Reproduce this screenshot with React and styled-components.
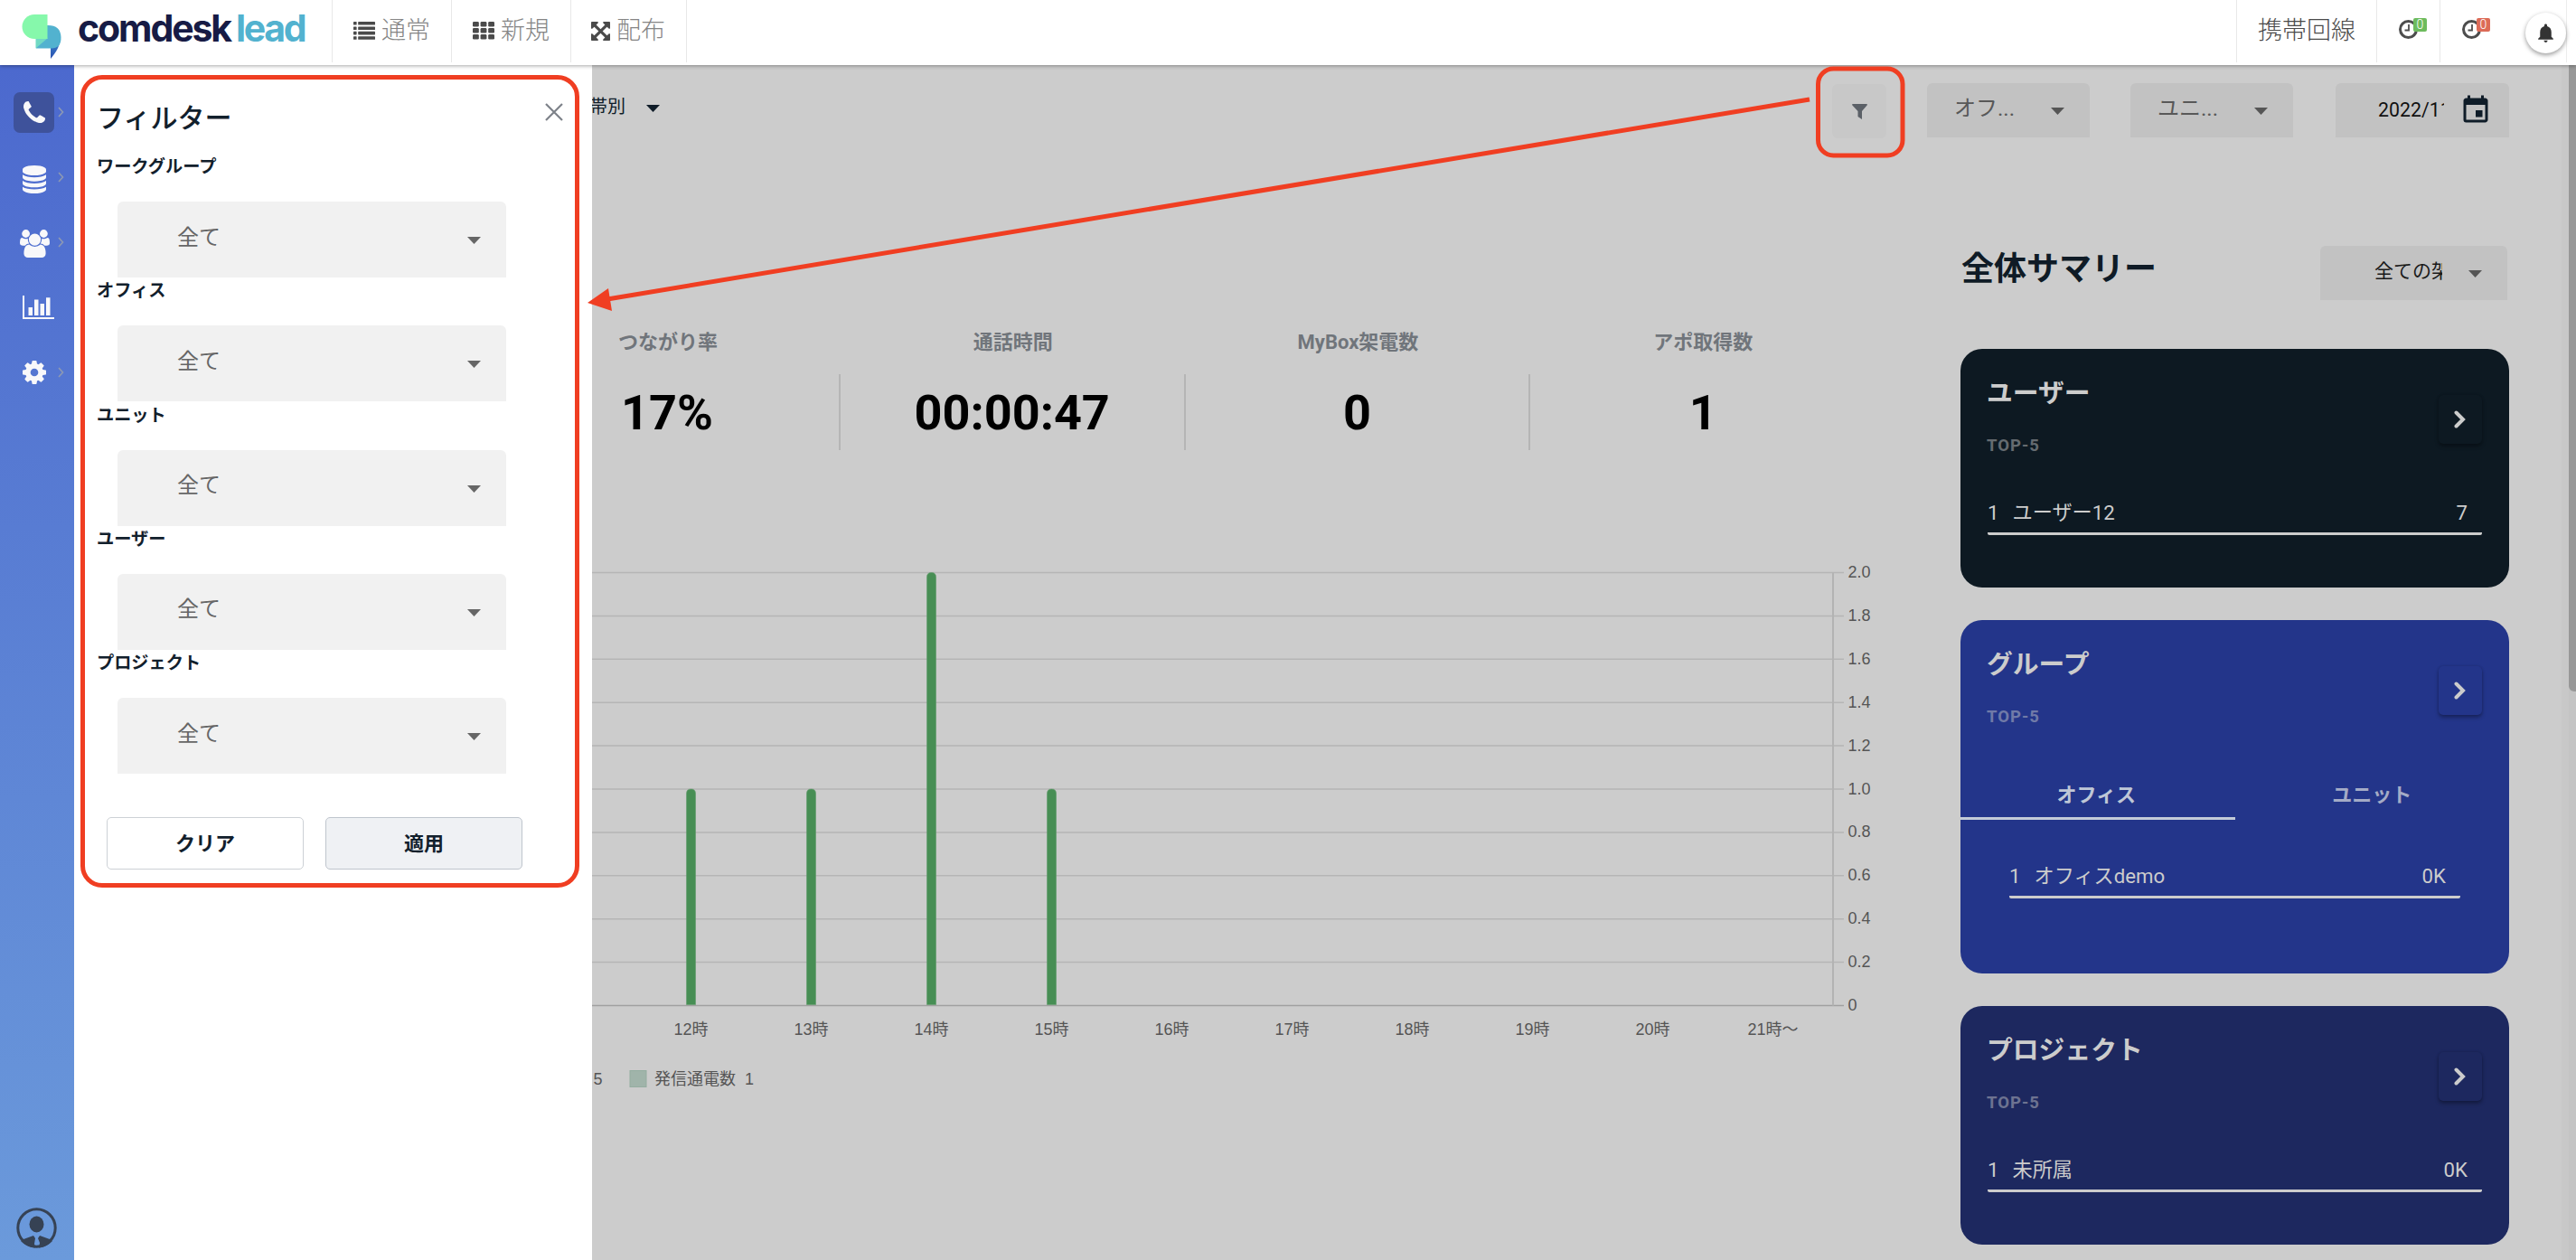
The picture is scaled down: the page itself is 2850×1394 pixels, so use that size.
import React from 'react';
import styled, { createGlobalStyle } from 'styled-components';
import { MdEvent, MdNotifications } from 'react-icons/md';

const GlobalStyle = createGlobalStyle`
  * {
      box-sizing: border-box;
  }

  body {
      margin: 0;
      overflow: hidden;
      background-color: #fff;
      font-family: Roboto, 'Noto Sans CJK JP', sans-serif;
  }

  svg {
      display: block;
      flex: none;
  }
`;

const Page = styled.div`
  position: relative;
  display: flex;
  flex-direction: column;
  width: 2850px;
  height: 1394px;
  overflow: hidden;
`;

/* ---------- header ---------- */

const Header = styled.header`
  position: relative;
  z-index: 2;
  display: flex;
  align-items: flex-start;
  flex: none;
  height: 72px;
  background-color: #fff;
  box-shadow: 0 1px 4px rgba(0, 0, 0, 0.35);
`;

const Brand = styled.div`
  display: flex;
  width: 368px;
  height: 69px;
  padding: 15px 0 0 23px;
  border-right: 1px solid #e8e8e8;
`;

const BrandName = styled.div`
  display: flex;
  gap: 6px;
  margin: -4px 0 0 18px;
  font: 700 41px/41px Inter, sans-serif;
  letter-spacing: -2.1px;
  color: #171b45;

  span {
      color: #52b2cf;
      letter-spacing: -2.3px;
  }
`;

const HeaderItem = styled.div`
  display: flex;
  align-items: center;
  gap: 7px;
  height: 69px;
  padding: ${(p) => p.$pad || '0 23px 1px'};
  border-right: 1px solid #e8e8e8;
  font-size: 27px;
  font-weight: 300;
  line-height: 30px;
  color: ${(p) => p.$color || '#858585'};
`;

const HeaderSpace = styled.div`
  flex: 1;
  height: 69px;
  border-right: 1px solid #e8e8e8;
`;

const ClockBox = styled.div`
  position: relative;
  width: ${(p) => p.$width}px;
  height: 69px;
  padding: 22px 0 0 24px;
  border-right: ${(p) => (p.$last ? 'none' : '1px solid #e8e8e8')};
`;

const Badge = styled.span`
  position: absolute;
  top: 20px;
  left: 40px;
  width: 15px;
  height: 15px;
  border-radius: 2px;
  background-color: ${(p) => p.$color};
  color: #fff;
  font-size: 14px;
  font-weight: 300;
  line-height: 14px;
  text-align: center;
`;

const BellArea = styled.div`
  width: 46px;
  height: 69px;
  padding-top: 14px;
  border-right: 1px solid #ececec;
`;

const BellButton = styled.div`
  display: flex;
  align-items: center;
  justify-content: center;
  width: 45px;
  height: 45px;
  border-radius: 50%;
  background-color: #fff;
  color: #333;
  box-shadow: 0 2px 5px rgba(0, 0, 0, 0.4);
`;

const HeaderEnd = styled.div`
  width: 10px;
`;

/* ---------- sidebar ---------- */

const Body = styled.div`
  display: flex;
  flex: 1;
  min-height: 0;
`;

const Sidebar = styled.nav`
  display: flex;
  flex-direction: column;
  flex: none;
  width: 82px;
  padding: 16px 0 13px;
  background: linear-gradient(#4c69ce, #6b9adb);
`;

const NavItem = styled.div`
  display: flex;
  align-items: center;
  justify-content: space-between;
  height: 72px;
  padding: 0 11px 0 15px;
`;

const NavIcon = styled.div`
  display: flex;
  align-items: center;
  justify-content: center;
  width: ${(p) => p.$width || 45}px;
  height: 45px;
  padding-top: ${(p) => p.$drop || 0}px;
  border-radius: 7px;
  background-color: ${(p) => (p.$active ? '#3e529b' : 'transparent')};
  color: #f8f8fa;
`;

const Account = styled.div`
  display: flex;
  justify-content: center;
  margin-top: auto;
  padding-right: 1px;
`;

/* ---------- filter drawer ---------- */

const Drawer = styled.aside`
  flex: none;
  width: 573px;
  padding: 11px 0 0 7px;
  background-color: #fff;
`;

const FilterPanel = styled.section`
  width: 552px;
  height: 899px;
  padding: 26px 0 0 13px;
  border: 5px solid #f03e22;
  border-radius: 24px;
`;

const FilterHead = styled.div`
  display: flex;
  justify-content: space-between;
  height: 51px;
  padding-right: 13px;
`;

const FilterTitle = styled.h2`
  margin: 0;
  font-size: 30px;
  font-weight: 500;
  line-height: 34px;
  color: #12202c;
`;

const Field = styled.div`
  height: 137.3px;
`;

const FieldLabel = styled.div`
  height: 58px;
  font-size: 19.2px;
  font-weight: 700;
  line-height: 39px;
  color: #12202c;
`;

const FieldSelect = styled.div`
  display: flex;
  align-items: center;
  justify-content: space-between;
  width: 430px;
  height: 84px;
  margin-left: 23px;
  padding: 0 28px 0 66px;
  border-radius: 6px 6px 0 0;
  background-color: #f1f1f1;
  font-size: 24px;
  font-weight: 400;
  line-height: 36px;
  color: #666;
`;

const SelectText = styled.span`
  width: ${(p) => (p.$width ? `${p.$width}px` : 'auto')};
  margin-top: -${(p) => p.$lift || 5}px;
  overflow: hidden;
  white-space: nowrap;
`;

const Actions = styled.div`
  display: flex;
  gap: 24px;
  padding: 53px 0 0 11px;
`;

const Button = styled.button`
  width: 218px;
  height: 58px;
  padding: 0 0 5px;
  border: 1px solid ${(p) => (p.$filled ? '#bfc5cd' : '#cdd1d6')};
  border-radius: 5px;
  background-color: ${(p) => (p.$filled ? '#eff1f4' : '#fff')};
  font: 700 22px Roboto, 'Noto Sans CJK JP', sans-serif;
  color: #12202c;
`;

/* ---------- dashboard ---------- */

const Main = styled.main`
  display: flex;
  flex-direction: column;
  width: 2187px;
  overflow: hidden;
  border-right: 8px solid #c8c8c8;
  background-color: #ccc;
`;

const TopBar = styled.div`
  display: flex;
  flex: none;
  height: 180px;
  padding: 20px 0 0;
`;

const Period = styled.div`
  display: flex;
  align-items: center;
  gap: 23px;
  width: 1375px;
  height: 54px;
  margin-left: -3px;
  font-size: 20px;
  line-height: 30px;
  color: #0f1c28;
`;

const FilterButton = styled.div`
  display: flex;
  align-items: center;
  justify-content: center;
  width: 60px;
  height: 60px;
  margin: 1px 45px 0 0;
  border-radius: 6px;
  background-color: #c8c8c8;
`;

const SmallSelect = styled.div`
  display: flex;
  align-items: center;
  justify-content: space-between;
  width: ${(p) => p.$width}px;
  height: 60px;
  margin-right: ${(p) => p.$gap || 0}px;
  padding: ${(p) => p.$pad};
  border-radius: 6px 6px 0 0;
  background-color: #c2c2c2;
  font-size: ${(p) => p.$size || 24}px;
  line-height: 36px;
  color: ${(p) => p.$color || '#585858'};
`;

const Columns = styled.div`
  display: flex;
  flex: 1;
`;

const Stats = styled.div`
  flex: none;
  width: 1514px;
`;

const Metrics = styled.div`
  display: flex;
  margin: 109px 0 0 -107px;
`;

const Metric = styled.div`
  width: 381.8px;
  text-align: center;
`;

const MetricName = styled.div`
  height: 53px;
  font-size: 22px;
  font-weight: 700;
  line-height: 35px;
  color: #70757b;
`;

const MetricValue = styled.div`
  height: 84px;
  border-right: ${(p) => (p.$last ? 'none' : '2px solid #b5b5b5')};
  font-size: 54px;
  font-weight: 700;
  line-height: 85px;
  color: #000;
`;

const ChartBox = styled.div`
  margin-top: 102px;

  text {
      font: 18px 'Liberation Sans', 'Noto Sans CJK JP', sans-serif;
      fill: #555;
  }
`;

const Summary = styled.section`
  width: 607px;
`;

const SummaryHead = styled.div`
  display: flex;
  justify-content: space-between;
  height: 134px;
  padding: 20px 2px 0 1px;
`;

const SummaryTitle = styled.h1`
  margin: 0;
  font-size: 36px;
  font-weight: 700;
  line-height: 53px;
  color: #0f1b26;
`;

const Card = styled.article`
  height: ${(p) => p.$height}px;
  margin-bottom: 36px;
  border-radius: 24px;
  background-color: ${(p) => p.$bg};
  color: #ccc;
`;

const CardHead = styled.div`
  display: flex;
  justify-content: space-between;
  height: 159px;
  padding: 29px 30px 0 29px;
`;

const CardTitle = styled.h3`
  margin: 0;
  font-size: 28.8px;
  font-weight: 700;
  line-height: 40px;
`;

const TopFive = styled.div`
  margin-top: 24px;
  font-size: 18.5px;
  font-weight: 700;
  letter-spacing: 1px;
  line-height: 28px;
  opacity: 0.46;
`;

const MoreButton = styled.div`
  display: flex;
  align-items: center;
  justify-content: center;
  width: 48px;
  height: 54px;
  margin-top: 22px;
  padding-right: 2px;
  border-radius: 5px;
  background-color: ${(p) => p.$bg};
  box-shadow: 0 3px 4px rgba(0, 0, 0, 0.3), 0 0 3px rgba(0, 0, 0, 0.15);
`;

const Tabs = styled.div`
  display: flex;
  margin-bottom: 40px;
`;

const Tab = styled.div`
  width: 303.5px;
  height: 62px;
  padding-right: ${(p) => (p.$active ? 3 : 0)}px;
  border-bottom: 3px solid ${(p) => (p.$active ? '#c3cbd8' : 'transparent')};
  font-size: 22px;
  font-weight: 700;
  line-height: 70px;
  text-align: center;
  color: ${(p) => (p.$active ? '#bfc7d6' : '#a4abc6')};
`;

const RankRow = styled.div`
  display: flex;
  height: 47px;
  margin: 0 ${(p) => (p.$inset ? 54 : 30)}px;
  padding-right: 16px;
  border-bottom: 3px solid #ccc;
  border-radius: 2px;
  font-size: 22.2px;
  font-weight: 400;
  line-height: 45px;

  span:nth-child(2) {
      flex: 1;
      margin-left: 15px;
  }
`;

const ScrollTrack = styled.div`
  width: 8px;
  background-color: #c4c4c4;
`;

const ScrollThumb = styled.div`
  height: 693px;
  border-radius: 0 0 0 6px;
  background-color: #989898;
`;

/* red arrow that lies over the whole page */
const Pointer = styled.svg`
  position: absolute;
  top: 0;
  left: 0;
  z-index: 3;
`;

/* ---------- icons ---------- */

function Logo() {
  return (
    <svg width="45" height="50" viewBox="23 15 45 50">
      <defs>
        <linearGradient id="tail" x1="0" y1="0" x2="0" y2="1">
          <stop offset="0" stopColor="#3f8fd0" />
          <stop offset="1" stopColor="#2a50b0" />
        </linearGradient>
      </defs>
      <path d="M56 52l11-12c0 10-5 18-11 25z" fill="url(#tail)" />
      <path d="M40 53.500V28h13q14 0 14.500 13t-12 12.500z" fill="#52b2cf" />
      <path d="M39.500 53.500V42H53z" fill="#71d9c3" />
      <path d="M52.500 16v27H38a13.500 13.500 0 0 1 0-27z" fill="#86f8ab" />
    </svg>
  );
}

function Caret({ color = '#666' }) {
  return (
    <svg width="15" height="10" viewBox="0 0 15 10">
      <path d="M0 2h15L7.500 10z" fill={color} />
    </svg>
  );
}

function Chevron() {
  return (
    <svg width="7" height="12" viewBox="0 0 7 12" fill="none" stroke="#8d99b3" strokeWidth="1.600">
      <path d="M1 1l4.500 5L1 11" />
    </svg>
  );
}

function PhoneIcon() {
  return (
    <svg width="24" height="24" viewBox="0 128 1408 1408" fill="currentColor">
      <path d="M1408 1240q0 27-10 70.500t-21 68.500q-21 50-122 106-94 51-186 51-27 0-53-3.500t-57.500-12.500-47-14.500-55.500-20.500-49-18q-98-35-175-83-127-79-264-216t-216-264q-48-77-83-175-3-9-18-49t-20.500-55.500-14.500-47-12.500-57.500-3.500-53q0-92 51-186 56-101 106-122 25-11 68.500-21t70.500-10q14 0 21 3 18 6 53 76 11 19 30 54t35 63.500 31 53.500q3 4 17.500 25t21.500 35.500 7 28.500q0 20-28.500 50t-62 55-62 53-28.500 46q0 9 5 22.500t8.500 20.500 14 24 11.500 19q76 137 174 235t235 174q2 1 19 11.500t24 14 20.500 8.500 22.500 5q18 0 46-28.500t53-62 55-62 50-28.500q14 0 28.500 7t35.500 21.500 25 17.500q25 15 53.500 31t63.500 35 54 30q70 35 76 53 3 7 3 21z" />
    </svg>
  );
}

function DatabaseIcon() {
  return (
    <svg width="26" height="31" viewBox="0 0 1536 1792" preserveAspectRatio="none" fill="currentColor">
      <path d="M768 768q237 0 443-43t325-127v170q0 69-103 128t-280 93.500-385 34.500-385-34.500-280-93.500-103-128v-170q119 84 325 127t443 43zm0 768q237 0 443-43t325-127v170q0 69-103 128t-280 93.500-385 34.500-385-34.500-280-93.500-103-128v-170q119 84 325 127t443 43zm0-384q237 0 443-43t325-127v170q0 69-103 128t-280 93.500-385 34.500-385-34.500-280-93.500-103-128v-170q119 84 325 127t443 43zm0-1152q208 0 385 34.500t280 93.500 103 128v128q0 69-103 128t-280 93.500-385 34.500-385-34.500-280-93.500-103-128v-128q0-69 103-128t280-93.500 385-34.500z" />
    </svg>
  );
}

function UsersIcon() {
  return (
    <svg width="33" height="31" viewBox="0 0 1920 1792" fill="currentColor">
      <path d="M593 896q-162 5-265 128h-134q-82 0-138-40.500t-56-118.500q0-353 124-353 6 0 43.500 21t97.500 42.500 119 21.500q67 0 133-23-5 37-5 66 0 139 81 256zm1071 637q0 120-73 189.500t-194 69.500h-874q-121 0-194-69.500t-73-189.500q0-53 3.500-103.500t14-109 26.500-108.500 43-97.500 62-81 85.500-53.500 111.500-20q10 0 43 21.500t73 48 107 48 135 21.500 135-21.500 107-48 73-48 43-21.500q61 0 111.500 20t85.500 53.500 62 81 43 97.500 26.500 108.500 14 109 3.500 103.500zm-1024-1277q0 106-75 181t-181 75-181-75-75-181 75-181 181-75 181 75 75 181zm704 384q0 159-112.500 271.500t-271.500 112.500-271.500-112.500-112.500-271.500 112.500-271.500 271.500-112.500 271.500 112.500 112.500 271.500zm576 225q0 78-56 118.500t-138 40.500h-134q-103-123-265-128 81-117 81-256 0-29-5-66 66 23 133 23 59 0 119-21.500t97.500-42.500 43.500-21q124 0 124 353zm-128-609q0 106-75 181t-181 75-181-75-75-181 75-181 181-75 181 75 75 181z" />
    </svg>
  );
}

function ChartIcon() {
  return (
    <svg width="35" height="26" viewBox="0 0 35 26" fill="currentColor">
      <path d="M0 0h2v24h33v2H0zM6.500 13h4.500v9H6.500zM13 4.500h4.500V22H13zM19.500 9H24v13h-4.500zM26 2.200h4.500V22H26z" />
    </svg>
  );
}

function CogIcon() {
  return (
    <svg width="26" height="26" viewBox="0 -128 1536 1536" fill="currentColor">
      <path d="M1024 640q0-106-75-181t-181-75-181 75-75 181 75 181 181 75 181-75 75-181zm512-109v222q0 12-8 23t-20 13l-185 28q-19 54-39 91 35 50 107 138 10 12 10 25t-9 23q-27 37-99 108t-94 71q-12 0-26-9l-138-108q-44 23-91 38-16 136-29 186-7 28-36 28h-222q-14 0-24.500-8.500t-11.500-21.500l-28-184q-49-16-90-37l-141 107q-10 9-25 9-14 0-25-11-126-114-165-168-7-10-7-23 0-12 8-23 15-21 51-66.500t54-70.500q-27-50-41-99l-183-27q-13-2-21-12.500t-8-23.500v-222q0-12 8-23t19-13l186-28q14-46 39-92-40-57-107-138-10-12-10-24 0-10 9-23 26-36 98.500-107.500t94.500-71.500q13 0 26 10l138 107q44-23 91-38 16-136 29-186 7-28 36-28h222q14 0 24.500 8.500t11.500 21.500l28 184q49 16 90 37l142-107q9-9 24-9 13 0 25 10 129 119 165 170 7 8 7 22 0 12-8 23-15 21-51 66.500t-54 70.500q26 50 41 98l183 28q13 2 21 12.500t8 23.500z" />
    </svg>
  );
}

function ListIcon() {
  return (
    <svg width="24" height="20" viewBox="0 0 24 20" fill="#4a4a4a">
      {[0, 5.4, 10.8, 16.2].map((y) => (
        <g key={y}>
          <rect x="0" y={y} width="3.6" height="3.6" rx="0.6" />
          <rect x="5.200" y={y} width="18.8" height="3.6" rx="0.6" />
        </g>
      ))}
    </svg>
  );
}

function GridIcon() {
  return (
    <svg width="24" height="20" viewBox="0 0 24 20" fill="#4a4a4a">
      {[0, 7, 14].map((y) => [0, 8.6, 17.2].map((x) => (
        <rect key={`${x}-${y}`} x={x} y={y} width="6.8" height="5.6" rx="1.3" />
      )))}
    </svg>
  );
}

function ArrowsIcon() {
  return (
    <svg width="21" height="21" viewBox="0 0 1536 1536" fill="#4a4a4a">
      <path d="M1283 413l-355 355 355 355 144-144q29-31 70-14 39 17 39 59v448q0 26-19 45t-45 19h-448q-42 0-59-40-17-39 14-69l144-144-355-355-355 355 144 144q31 30 14 69-17 40-59 40h-448q-26 0-45-19t-19-45v-448q0-42 40-59 39-17 69 14l144 144 355-355-355-355-144 144q-19 19-45 19-12 0-24-5-40-17-40-59v-448q0-26 19-45t45-19h448q42 0 59 40 17 39-14 69l-144 144 355 355 355-355-144-144q-31-30-14-69 17-40 59-40h448q26 0 45 19t19 45v448q0 42-39 59-13 5-25 5-26 0-45-19z" />
    </svg>
  );
}

function ClockIcon() {
  return (
    <svg width="21" height="21" viewBox="0 0 21 21" fill="none" stroke="#4d4d4d">
      <circle cx="10.500" cy="10.500" r="9" strokeWidth="3" />
      <path d="M11 5v6.500H6.500" strokeWidth="1.800" />
    </svg>
  );
}

function AccountIcon() {
  return (
    <svg width="45" height="45" viewBox="0 0 45 45">
      <circle cx="22.500" cy="22.500" r="20.700" fill="none" stroke="#364254" strokeWidth="3" />
      <ellipse cx="22.500" cy="18.500" rx="8" ry="9" fill="#364254" />
      <path d="M5 37l3-2 11-4 2 3-1 6 1 4.500Q11 43.500 5 37zM40 37l-3-2-11-4-2 3 2 5-1 5.500Q34 43.500 40 37z" fill="#364254" />
    </svg>
  );
}

function MoreIcon() {
  return (
    <svg width="13" height="20" viewBox="0 0 13 20" fill="none" stroke="#ccc" strokeWidth="4" strokeLinecap="round">
      <path d="M2.500 2.500L10 10l-7.500 7.500" />
    </svg>
  );
}

/* ---------- parts ---------- */

const fields = ['ワークグループ', 'オフィス', 'ユニット', 'ユーザー', 'プロジェクト'];

const metrics = [
  { name: 'つながり率', value: '17%' },
  { name: '通話時間', value: '00:00:47' },
  { name: 'MyBox架電数', value: '0' },
  { name: 'アポ取得数', value: '1' },
];

const hours = ['12時', '13時', '14時', '15時', '16時', '17時', '18時', '19時', '20時', '21時〜'];
const calls = [1, 1, 2, 1];
const ticks = ['2.0', '1.8', '1.6', '1.4', '1.2', '1.0', '0.8', '0.6', '0.4', '0.2', '0'];

function Chart() {
  const top = 33.5;
  const step = 47.9;
  const bottom = top + step * 10;

  return (
    <svg width="1455" height="640" viewBox="0 0 1455 640">
      {ticks.map((tick, i) => (
        <g key={tick}>
          <path d={`M0 ${top + step * i}H1385`} stroke={i === 10 ? '#a0a0a0' : '#b5b5b5'} strokeWidth="1.5" />
          <text x="1389.500" y={top + step * i + 5.5}>{tick}</text>
        </g>
      ))}
      <path d={`M1373 ${top}V${bottom}`} stroke="#b3b3b3" strokeWidth="2" />
      {calls.map((n, i) => {
        const y = bottom - n * step * 5;
        const x = 104.5 + i * 133;
        return (
          <path
            key={i}
            d={`M${x} ${bottom - 1}V${y + 5}q0-5 5-5t5 5V${bottom - 1}z`}
            fill="#478e54"
            stroke="#5f9a69"
            strokeWidth="0.6"
          />
        );
      })}
      {hours.map((hour, i) => (
        <text key={hour} x={109.5 + i * 133} y="544.500" textAnchor="middle">{hour}</text>
      ))}
      <text x="1.500" y="600">5</text>
      <rect x="42" y="584.500" width="18" height="18" fill="#a0b4aa" stroke="#94ada0" />
      <text x="69" y="600">発信通電数</text>
      <text x="169" y="600">1</text>
    </svg>
  );
}

function SummaryCard({ title, bg, height, tabs, rank, value }) {
  return (
    <Card $bg={bg} $height={height}>
      <CardHead>
        <div>
          <CardTitle>{title}</CardTitle>
          <TopFive>TOP-5</TopFive>
        </div>
        <MoreButton $bg={bg}><MoreIcon /></MoreButton>
      </CardHead>
      {tabs && (
        <Tabs>
          <Tab $active>オフィス</Tab>
          <Tab>ユニット</Tab>
        </Tabs>
      )}
      <RankRow $inset={tabs}>
        <span>1</span>
        <span>{rank}</span>
        <span>{value}</span>
      </RankRow>
    </Card>
  );
}

export default function App() {
  return (
    <Page>
      <GlobalStyle />
      <Header>
        <Brand>
          <Logo />
          <BrandName>comdesk<span>lead</span></BrandName>
        </Brand>
        <HeaderItem><ListIcon />通常</HeaderItem>
        <HeaderItem><GridIcon />新規</HeaderItem>
        <HeaderItem $pad="0 23px 1px 22px"><ArrowsIcon />配布</HeaderItem>
        <HeaderSpace />
        <HeaderItem $color="#4a4a4a">携帯回線</HeaderItem>
        <ClockBox $width={70}>
          <ClockIcon />
          <Badge $color="#6dbb5d">0</Badge>
        </ClockBox>
        <ClockBox $width={94} $last>
          <ClockIcon />
          <Badge $color="#dc6b57">0</Badge>
        </ClockBox>
        <BellArea>
          <BellButton><MdNotifications size={25} /></BellButton>
        </BellArea>
        <HeaderEnd />
      </Header>

      <Body>
        <Sidebar>
          <NavItem><NavIcon $active><PhoneIcon /></NavIcon><Chevron /></NavItem>
          <NavItem><NavIcon $drop={4}><DatabaseIcon /></NavIcon><Chevron /></NavItem>
          <NavItem><NavIcon $width={47} $drop={2}><UsersIcon /></NavIcon><Chevron /></NavItem>
          <NavItem><NavIcon $width={55}><ChartIcon /></NavIcon></NavItem>
          <NavItem><NavIcon><CogIcon /></NavIcon><Chevron /></NavItem>
          <Account><AccountIcon /></Account>
        </Sidebar>

        <Drawer>
          <FilterPanel>
            <FilterHead>
              <FilterTitle>フィルター</FilterTitle>
              <svg width="20" height="20" viewBox="0 0 20 20" stroke="#7d8289" strokeWidth="2.200">
                <path d="M1 1l18 18M19 1L1 19" />
              </svg>
            </FilterHead>
            {fields.map((name) => (
              <Field key={name}>
                <FieldLabel>{name}</FieldLabel>
                <FieldSelect><SelectText>全て</SelectText><Caret /></FieldSelect>
              </Field>
            ))}
            <Actions>
              <Button>クリア</Button>
              <Button $filled>適用</Button>
            </Actions>
          </FilterPanel>
        </Drawer>

        <Main>
          <TopBar>
            <Period><SelectText $lift={3}>帯別</SelectText><Caret color="#0f1c28" /></Period>
            <FilterButton>
              <svg width="17" height="17" viewBox="0 0 17 17">
                <path d="M1 0h15q1.500 0 .6 1.500L11 8v9l-4.500-3V8L.4 1.500Q-.5 0 1 0z" fill="#5b6067" />
              </svg>
            </FilterButton>
            <SmallSelect $width={180} $gap={45} $pad="0 28px 0 30px">
              <SelectText>オフ...</SelectText>
              <Caret color="#555" />
            </SmallSelect>
            <SmallSelect $width={180} $gap={47} $pad="0 28px 0 30px">
              <SelectText>ユニ...</SelectText>
              <Caret color="#555" />
            </SmallSelect>
            <SmallSelect $width={192} $pad="0 19px 0 47px" $size={21.3} $color="#111">
              <SelectText $width={73} $lift={1}>2022/11</SelectText>
              <MdEvent size={36} color="#0f1c28" />
            </SmallSelect>
          </TopBar>

          <Columns>
            <Stats>
              <Metrics>
                {metrics.map((m, i) => (
                  <Metric key={m.name}>
                    <MetricName>{m.name}</MetricName>
                    <MetricValue $last={i === metrics.length - 1}>{m.value}</MetricValue>
                  </Metric>
                ))}
              </Metrics>
              <ChartBox><Chart /></ChartBox>
            </Stats>

            <Summary>
              <SummaryHead>
                <SummaryTitle>全体サマリー</SummaryTitle>
                <SmallSelect $width={207} $pad="0 28px 0 60px" $size={21} $color="#1a1a1a">
                  <SelectText $width={75}>全ての架電</SelectText>
                  <Caret color="#555" />
                </SmallSelect>
              </SummaryHead>
              <SummaryCard title="ユーザー" bg="#0d1922" height={264} rank="ユーザー12" value="7" />
              <SummaryCard title="グループ" bg="#23358a" height={391} tabs rank="オフィスdemo" value="0K" />
              <SummaryCard title="プロジェクト" bg="#1d285f" height={264} rank="未所属" value="0K" />
            </Summary>
          </Columns>
        </Main>

        <ScrollTrack><ScrollThumb /></ScrollTrack>
      </Body>

      <Pointer width="2850" height="400" viewBox="0 0 2850 400">
        <rect x="2011.500" y="76" width="93.500" height="96" rx="17" fill="none" stroke="#f03e22" strokeWidth="5" />
        <path d="M2002 110L672 331" stroke="#f03e22" strokeWidth="5" />
        <path d="M650 335l23-16 4 25z" fill="#f03e22" />
      </Pointer>
    </Page>
  );
}
